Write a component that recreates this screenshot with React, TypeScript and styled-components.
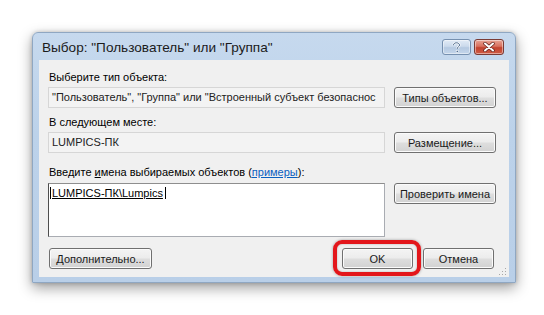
import React from 'react'
import styled, { createGlobalStyle } from 'styled-components'

const GlobalStyle = createGlobalStyle`
  html, body {
    margin: 0;
    padding: 0;
    background: #ffffff;
  }
  body {
    font-family: 'Liberation Sans', Arial, sans-serif;
    font-size: 11px;
    color: #000;
  }
`

const Stage = styled.div`
  width: 544px;
  height: 315px;
  padding: 32px 0 0 32px;
  box-sizing: border-box;
`

const Window = styled.div`
  width: 484px;
  height: 251px;
  box-sizing: border-box;
  display: flex;
  flex-direction: column;
  padding: 0 6px 5px 6px;
  background: linear-gradient(180deg, #c6d9ee 0%, #bcd2ea 40%, #b9cfe8 100%);
  border: 1px solid #8fa7c2;
  border-radius: 6px 6px 0 0;
  box-shadow: 0 5px 14px rgba(0, 0, 0, 0.38), 0 0 4px rgba(0, 0, 0, 0.2);
`

const TitleBar = styled.div`
  height: 27px;
  display: flex;
  align-items: flex-start;
  justify-content: space-between;
`

const Title = styled.div`
  font-size: 13.6px;
  line-height: 18px;
  padding: 6px 0 0 3px;
  color: #1b1b1b;
  white-space: nowrap;
`

const CaptionButtons = styled.div`
  display: flex;
  gap: 3px;
  padding-top: 6px;
  margin-right: 5px;
`

const CaptionButton = styled.div<{ $danger?: boolean }>`
  width: ${p => (p.$danger ? 30 : 29)}px;
  height: 16px;
  box-sizing: border-box;
  border: 1px solid ${p => (p.$danger ? '#7a3b35' : '#7690af')};
  border-radius: 3px;
  display: flex;
  align-items: center;
  justify-content: center;
  background: ${p =>
    p.$danger
      ? 'linear-gradient(180deg, #e8a596 0%, #d8705e 45%, #c2432f 55%, #d05c45 100%)'
      : 'linear-gradient(180deg, #e2ebf6 0%, #cbdaec 45%, #b5c9e1 55%, #c4d6eb 100%)'};
  box-shadow: inset 0 0 0 1px rgba(255, 255, 255, 0.45);
`

const Client = styled.div`
  position: relative;
  flex: 1;
  background: #f0f0f0;
  padding: 10px 15px 0 9px;
  display: flex;
  flex-direction: column;
`

const Label = styled.div<{ $gap?: number }>`
  line-height: 15px;
  padding-left: 1px;
  margin-top: ${p => p.$gap ?? 0}px;
  white-space: nowrap;
`

const Row = styled.div<{ $top?: boolean; $gap?: number }>`
  display: grid;
  grid-template-columns: 337px 102px;
  column-gap: 9px;
  align-items: ${p => (p.$top ? 'start' : 'center')};
  margin-top: ${p => p.$gap ?? 2}px;
`

const ReadField = styled.div`
  height: 21px;
  box-sizing: border-box;
  border: 1px solid #d6d6d6;
  background: #f3f3f3;
  padding: 0 3px;
  line-height: 19px;
  white-space: nowrap;
  overflow: hidden;
  color: #222;
`

const InputArea = styled.div`
  height: 54px;
  box-sizing: border-box;
  border: 1px solid #a9acb2;
  border-left-color: #4e4e4e;
  border-top-color: #8e8e8e;
  background: #ffffff;
  padding: 1px 0 0 1px;
  line-height: 16px;
`

const Resolved = styled.span`
  text-decoration: underline;
  border-right: 1px solid #000;
  border-left: 1px solid #000;
  padding: 0 2px 0 1px;
`

const Button = styled.div<{ $w?: number }>`
  width: ${p => p.$w ?? 102}px;
  height: 21px;
  box-sizing: border-box;
  border: 1px solid #707070;
  border-radius: 3px;
  background: linear-gradient(180deg, #f4f4f4 0%, #ececec 48%, #dedede 52%, #d2d2d2 100%);
  box-shadow: inset 0 0 0 1px #fbfbfb;
  display: flex;
  align-items: center;
  justify-content: center;
  color: #1a1a1a;
  white-space: nowrap;
`

const Link = styled.span`
  color: #0a5fc0;
  text-decoration: underline;
`

const Key = styled.span`
  text-decoration: underline;
`

const Footer = styled.div`
  display: flex;
  align-items: center;
  margin-top: 11px;
  padding-left: 1px;
`

const Spacer = styled.div`
  flex: 1;
`

const Highlight = styled.div`
  position: relative;
  margin-right: 10px;

  &::after {
    content: '';
    position: absolute;
    left: -9px;
    right: -8px;
    top: -8px;
    bottom: -7px;
    border: 4px solid #e3161b;
    border-radius: 9px;
    box-shadow: 0 0 3px rgba(0, 0, 0, 0.35), inset 0 0 2px rgba(0, 0, 0, 0.3);
  }
`

const Grip = styled.svg`
  position: absolute;
  right: 2px;
  bottom: 1px;
`

export default function App() {
  return (
    <>
      <GlobalStyle />
      <Stage>
        <Window>
          <TitleBar>
            <Title>Выбор: "Пользователь" или "Группа"</Title>
            <CaptionButtons>
              <CaptionButton>
                <svg width="9" height="11" viewBox="0 0 9 11">
                  <path
                    d="M1.5 3.2C1.5 1.6 2.8 0.8 4.5 0.8S7.5 1.7 7.5 3.1C7.5 4.6 5.2 5 5.2 6.8"
                    fill="none"
                    stroke="#fff"
                    strokeWidth="2.2"
                  />
                  <path
                    d="M1.5 3.2C1.5 1.6 2.8 0.8 4.5 0.8S7.5 1.7 7.5 3.1C7.5 4.6 5.2 5 5.2 6.8"
                    fill="none"
                    stroke="#3f5f86"
                    strokeWidth="1"
                  />
                  <rect x="4.2" y="8.3" width="2" height="2" fill="#3f5f86" stroke="#fff" strokeWidth="0.6" />
                </svg>
              </CaptionButton>
              <CaptionButton $danger>
                <svg width="12" height="10" viewBox="0 0 12 10">
                  <path d="M2 1.5L10 8.5M10 1.5L2 8.5" stroke="#5e2019" strokeWidth="3.4" strokeLinecap="round" />
                  <path d="M2 1.5L10 8.5M10 1.5L2 8.5" stroke="#ffffff" strokeWidth="2" strokeLinecap="round" />
                </svg>
              </CaptionButton>
            </CaptionButtons>
          </TitleBar>
          <Client>
            <Label>Выберите тип объекта:</Label>
            <Row>
              <ReadField>"Пользователь", "Группа" или "Встроенный субъект безопаснос</ReadField>
              <Button>Типы объектов...</Button>
            </Row>
            <Label $gap={7}>В следующем месте:</Label>
            <Row>
              <ReadField>LUMPICS-ПК</ReadField>
              <Button>Размещение...</Button>
            </Row>
            <Label $gap={12}>
              Введите <Key>и</Key>мена выбираемых объектов (<Link>примеры</Link>):
            </Label>
            <Row $top $gap={3}>
              <InputArea>
                <Resolved>LUMPICS-ПК\Lumpics</Resolved>
              </InputArea>
              <Button>Проверить имена</Button>
            </Row>
            <Footer>
              <Button $w={103}>Дополнительно...</Button>
              <Spacer />
              <Highlight>
                <Button $w={71}>OK</Button>
              </Highlight>
              <Button $w={71}>Отмена</Button>
            </Footer>
            <Grip width="8" height="8" viewBox="0 0 8 8">
              <g fill="#a8a8a8">
                <rect x="6" y="0" width="1" height="1" />
                <rect x="3" y="3" width="1" height="1" />
                <rect x="6" y="3" width="1" height="1" />
                <rect x="0" y="6" width="1" height="1" />
                <rect x="3" y="6" width="1" height="1" />
                <rect x="6" y="6" width="1" height="1" />
              </g>
            </Grip>
          </Client>
        </Window>
      </Stage>
    </>
  )
}
